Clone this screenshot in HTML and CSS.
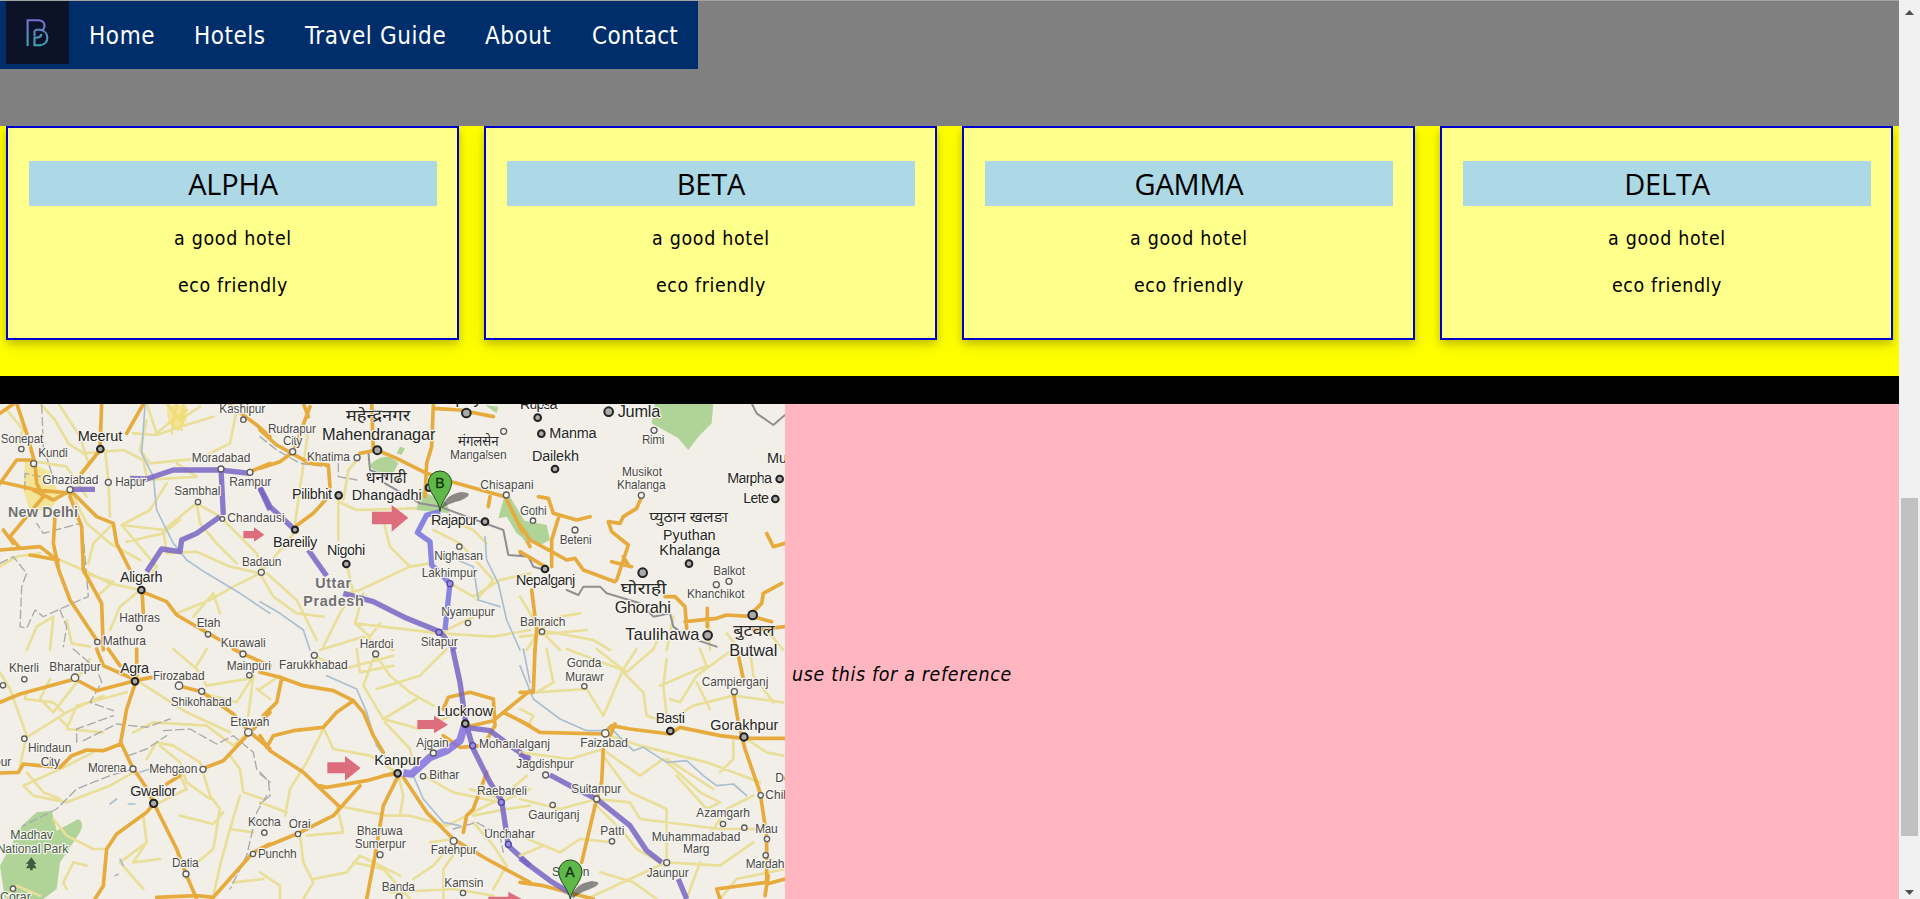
FILE: index.html
```html
<!DOCTYPE html>
<html lang="en">
<head>
<meta charset="utf-8">
<title>Hotels</title>
<link rel="stylesheet" href="styles.css">
</head>
<body>
<div class="window">
<main class="page">
  <header class="top">
    <nav class="nav">
      <svg class="logo" viewBox="6 1 63 63"><defs><linearGradient id="lg" x1="0" y1="19" x2="0" y2="46" gradientUnits="userSpaceOnUse"><stop offset="0" stop-color="#8068cf"/><stop offset="1" stop-color="#35a9b5"/></linearGradient></defs><path d="M27.6 46V20.2H38.5C45 20.5 46.2 27 42 30.5M34.5 36V31.5Q35 29.5 37.500 29.8H40C49.500 31 50 44.500 40 45.200H34.500V37.500H38Q41 37 41.500 34" fill="none" stroke="url(#lg)" stroke-width="2.1"/></svg>
      <a class="link home">Home</a><a class="link hotels">Hotels</a><a class="link guide">Travel Guide</a><a class="link about">About</a><a class="link contact">Contact</a>
    </nav>
  </header>
  <section class="cards">
    <article class="card"><h2>ALPHA</h2><p class="good">a good hotel</p><p class="eco">eco friendly</p></article>
    <article class="card"><h2>BETA</h2><p class="good">a good hotel</p><p class="eco">eco friendly</p></article>
    <article class="card"><h2>GAMMA</h2><p class="good">a good hotel</p><p class="eco">eco friendly</p></article>
    <article class="card"><h2>DELTA</h2><p class="good">a good hotel</p><p class="eco">eco friendly</p></article>
  </section>
  <div class="band"></div>
  <section class="place">
    <svg class="map" viewBox="0 404 785 495">
      <!-- north-west -->
      <g transform="translate(0,400) scale(.33333)">
        <g class="yr"><path d="M120 10L165 60L205 130L250 160L370 150L430 180L440 230M175 10L240 110L265 190L240 220M440 10L470 100L500 75L560 30M500 10L540 60L600 20M530 10L515 100M550 10L545 90M400 100L470 105L540 80L640 50M315 150L325 240L330 350M440 240L590 230L530 190M365 375L450 330L500 250M365 375L490 390L590 310L660 350L770 460L790 520M365 375L470 500L440 540M380 425L490 400L540 360M440 60L420 150L450 190L600 175L690 130L710 30M590 310L600 370L650 430L710 490M490 390L500 460L590 455L690 500L780 520L700 560L630 600L530 640M340 370L280 430L265 490M180 480L250 510L330 550L420 570M250 520L340 545L290 590M420 570L360 620L330 690M580 650L640 580L660 640M80 180L200 200L260 290M210 270L260 370L330 430L420 480M80 750L110 680L160 650L150 750M200 660L215 730L270 740M0 500L50 470L120 460M20 30L70 90L50 130"/></g>
        <path class="town" d="M75 180L150 215L180 290L150 330L90 335L70 270ZM500 15L560 15L560 60L535 95L505 70Z"/>
        <path class="border" d="M125 15L130 140L155 220M75 270L75 220L120 230M0 490L40 470L80 520L65 560L60 680L80 685L105 630L130 650L240 600L265 590L250 410L240 370L130 400L110 370M180 630L200 680L190 740"/>
        <path class="river" d="M435 15L425 160L460 230L470 330L500 390L520 430L560 480L620 520L720 580L810 640"/>
        <g class="or"><path d="M50 10L80 100L105 190L110 250L130 290M40 12L0 40M305 10L300 150L245 220M430 12L380 100M0 250L50 180L100 180M0 245L110 270L220 280L290 350L340 370L350 430L390 510M130 290L30 410L60 445L120 440L165 475L180 520L210 600L290 720M0 450L60 445M165 350L160 430L175 500M210 290L245 380L250 510L305 610L310 750M90 465L175 480M100 270L160 300L215 270M10 390L40 430M426 570L430 640M426 575L500 605L530 645L625 700L660 720M690 15L770 75L810 110M750 215L810 190"/></g>
        <g class="route"><path d="M210 268H285M390 235L440 237L520 210H660L750 220M663 207L670 345M660 350L590 400L545 420L540 455L485 447L440 515M780 265L810 330"/></g>
      </g>
      <!-- north -->
      <g transform="translate(260,400) scale(.33333)">
        <g class="yr"><path d="M145 90L105 370M145 190L200 195M300 170L265 210L250 300M235 290L235 420M235 305L290 330L470 325M370 360L390 440L450 500L300 570L260 580M450 500L510 490M260 490L280 580L240 640L190 740M0 520L40 590L110 640L190 650M20 520L110 600L170 720M180 750L310 710L400 750M285 670L540 700L660 640M310 580L285 670L330 710L360 670M570 550L640 590L720 540L810 520M520 390L600 430L700 540L650 600M540 700L700 710L810 690M545 350L640 390L680 430M105 395L70 440L0 520"/></g>
        <path class="green" d="M335 190Q380 150 415 190L400 220Q350 220 330 200ZM420 140L435 145L425 165L410 160ZM730 300L750 290L810 390V430L770 400L740 350L715 355ZM480 270L560 310L570 340L470 330ZM675 15L715 20L710 40Z"/>
        <path class="border solid" d="M325 155L330 210L380 230M375 250L480 310L540 320L620 350L730 390L745 465L810 470"/>
        <path class="border" d="M0 110L50 150L120 190L200 200M235 190V230L290 240"/>
        <path class="river" d="M0 605L60 640L130 690L150 750M675 410L680 480L715 550L740 660L780 750M570 470L640 500L655 600L720 620"/>
        <g class="or"><path d="M0 90L50 135L150 190L205 195L210 260L205 290L160 340L105 380M0 205L60 185L100 155L150 20M300 160L350 150L410 175L500 220L575 245L735 290L810 440M335 10L340 150M520 15L515 140L500 190L495 290M520 25L600 30L700 50M130 10L145 50M690 290L685 320"/></g>
        <g class="route"><path d="M0 262L30 320L105 390M145 450L200 528M250 580L340 605L440 655L540 695L585 750"/></g><g class="route blue"><path d="M540 335L500 345L472 398L510 425L515 495L570 550L555 690"/></g>
        <path class="arrow" d="M336 335H395V315L445 353L395 395V373H336Z"/>
      </g>
      <!-- north-east -->
      <g transform="translate(520,400) scale(.33333)">
        <path class="green" d="M405 10H580L575 70L535 110L505 150L475 115L395 70ZM0 360L80 375L90 420L60 435L10 420Z"/>
        <g class="yr"><path d="M0 590L60 690L220 720L270 750M60 690L120 650L180 640M60 690L20 750M60 690L120 750M0 710L200 690M460 650L440 750M400 750L420 700M740 690L790 750M565 660L570 750M620 700L660 750"/></g>
        <path class="border solid" d="M695 10L710 40L760 75L795 45M0 462L25 470L40 500L75 510M140 570L175 585L190 560L240 560L260 580L360 610L400 650L450 640L460 680L500 710L590 740"/>
        <g class="or"><path d="M55 290L85 295L100 340L170 360L210 350M0 375L30 420L95 455L140 480L165 475L190 510L285 545M115 355L95 420L95 500M365 290L350 325L310 350L300 370L265 365L275 395L325 435L290 540M275 485L335 500M310 470L325 495M0 455L75 500M35 570L50 690L45 750M435 590L465 590L495 620L500 685M495 665L590 655L620 645L700 650L755 665M562 625V680M695 640L725 610L730 580L785 550M740 400L760 440L795 430M700 690L795 680"/></g>
      </g>
      <!-- south-west -->
      <g transform="translate(0,649) scale(.33333)">
        <path class="green" d="M65 530L110 490L155 485L170 545L235 510Q255 520 240 550L180 640L170 720L130 750H15L0 650Z"/>
        <g class="yr"><path d="M0 70L30 120L80 260L60 350M80 265L200 190L310 140M80 130L75 150L160 160L190 190M150 90L120 150L160 190L230 100M270 30L230 90M420 100L560 190L690 250M310 250L200 240L230 170L380 130M200 230L180 210M400 250L460 220L620 230L700 290L745 250M440 330L470 280L520 290L600 340L630 440L660 480L640 600L580 650M480 290L540 340L560 400L630 450M280 310L180 360L70 410L100 440L200 460L330 410L400 370M80 370L130 430L180 450M460 470L560 420L540 380M540 500L640 525L670 490M430 500L440 580L360 640L430 720M440 580L400 640L480 630M160 510L200 560L280 600L310 600M200 720L190 700L220 640L260 650M690 320L720 360L730 430L790 450M720 440L690 540L660 650L640 740M690 540L760 550M520 0L590 60L620 110L740 90M600 130L710 160L760 80L745 200M620 0L590 50M770 120L810 150M700 700L790 690M20 740L50 710L120 740"/></g>
        <path class="border" d="M220 0L290 60L305 100L270 160L340 185M230 280V240L340 200M250 275L350 225L440 235L510 210M490 245L570 240L650 285L700 260L760 310L770 360L810 400M385 320L440 300L500 260M400 360L330 380L230 420L170 480L70 530M800 440L770 490L740 620L690 720"/>
        <path class="river" d="M330 465L350 450M385 465H405M360 630L370 650M345 680L355 675M420 370L450 360"/>
        <g class="or"><path d="M0 160L60 135L225 90L290 125L405 95L455 85M290 0L310 50L400 90M325 0L360 50M410 0V90L380 180L362 280L395 350L435 410L460 460M362 285L310 305L260 303L215 320L180 355L120 350L70 345L55 370L0 372M460 465L440 490L350 555L320 600L310 710L285 750M465 470L530 600L560 680L590 750M605 360L670 335L750 250L810 300M535 110L605 128L700 195L745 245M810 190L760 240M500 405L540 380M470 745L590 740L640 745L760 610L810 585M700 0L730 15L810 50"/></g>
      </g>
      <!-- south -->
      <g transform="translate(260,649) scale(.33333)">
        <g class="yr"><path d="M0 120L60 80M160 20L250 60L400 20M345 15L390 80L450 130L520 170M345 15L310 110L370 210L470 150M350 120L480 80L560 0M290 0L300 70L400 50M370 210L480 240L600 190M190 235L220 300L330 320L410 370M190 240L140 340L90 420L75 500M0 460L80 490M230 470L380 500L450 500L560 530L620 500L720 450M415 380L430 440L420 500M490 380L580 430L720 460L810 420M375 220L450 300L460 340M140 560L250 550L230 470M120 560L130 640L160 700L130 750M0 670L60 710V750M160 690L260 670L300 620L420 680M510 580L580 570M580 580L520 650L460 690M600 590L550 660V750M390 730L580 720L700 740M640 520L700 590L740 650L700 720M280 640L370 660L450 750M640 500L740 480L810 470M630 420L720 450L800 380"/></g>
        <path class="border" d="M0 375L25 395L30 440L0 465M580 540L650 520L720 560L730 610"/>
        <path class="river" d="M200 80L290 120L320 190L350 290L380 330M460 380L490 450L550 520L600 530M790 0L810 100"/>
        <g class="or"><path d="M0 70L60 85L130 110L220 125L280 155L310 190L340 260L370 310M65 90L50 160L10 200M280 155L230 190L190 235L100 245L40 260L20 295M0 260L30 305L130 370L235 470M410 370L320 395L200 415L180 410M300 410L220 500L110 555L0 600M415 380L370 470L345 620L320 750M430 385L500 490L580 570L680 630L810 700M615 235L700 215L730 190L810 125M550 180L565 145L630 130L700 150L705 230L670 290L600 295L550 260M730 190L810 230M680 370L640 480L620 500L610 550M410 375L370 380"/></g>
        <g class="route"><path d="M578 0L600 100L617 220L640 300L690 400L725 455L745 590L810 650M617 235L690 245L750 290L810 330"/></g><g class="route thick"><path d="M615 225L600 275L560 305L510 325L455 375L430 372"/></g>
        <path class="arrow" d="M202 340H255V321L302 357L255 395V373H202ZM472 213H522V200L564 227L522 253V240H472ZM685 743H745V728L785 750H685Z"/>
      </g>
      <!-- south-east -->
      <g transform="translate(520,649) scale(.33333)">
        <g class="yr"><path d="M80 0L100 100L50 130L200 120L250 200L310 60L350 0M140 0L300 60L370 130L380 200L440 220M230 0L320 70L400 0M440 30L430 110L440 200M450 150L480 160L530 80L640 0M530 100L570 180M420 110L560 50L540 0M440 220L520 170L640 140L790 160M640 270L640 330L600 370M270 260L360 290L560 340L720 400M250 320L330 430L440 480V640M260 310L360 380L430 330L540 430L600 460L560 480L470 380M440 330L580 420M0 450L120 480L230 450L330 460L360 510L600 540L730 540M0 560L120 610L180 570L280 580M230 470L310 550L350 600L420 640M440 640L330 690L200 750M440 640L600 650L700 580M240 670L340 700L410 750M500 750L540 640M560 570L620 480L700 440M0 310L150 330L250 300M680 270L740 310L790 320M0 180L40 200L30 220M600 750L650 690L795 660M690 0L700 80L760 160M0 620L70 590"/></g>
        <path class="river" d="M0 50L40 150L120 210L200 245H260M280 245L340 305L370 295L440 340L500 335L550 380L590 410L640 405L680 440"/>
        <g class="or"><path d="M45 0L40 130H0M0 215L60 250L250 255L275 230L330 240L450 255L480 235L600 260L670 268L795 268M285 225L270 260M250 300L245 400L230 450L185 640M640 130L655 220L675 300L720 430L740 560V710M655 20L670 90M740 700L590 720L600 750M740 705L795 690M735 740L745 680M0 700L70 710L220 750"/></g>
        <g class="route"><path d="M0 315L30 340M90 378L150 410L230 450L330 530L380 605L425 640M475 690L500 750M0 628L90 695L155 735"/></g>
      </g>

      <g transform="translate(0,400) scale(.33333)">
        <g class="s"><text x="658" y="40" textLength="138">Kashipur</text><text x="2" y="128" textLength="128">Sonepat</text><text x="115" y="172" textLength="88">Kundi</text><text x="575" y="187" textLength="176">Moradabad</text><text x="127" y="251" textLength="168">Ghaziabad</text><text x="346" y="257" textLength="92">Hapur</text><text x="688" y="257" textLength="126">Rampur</text><text x="523" y="284" textLength="138">Sambhal</text><text x="682" y="366" textLength="172">Chandausi</text><text x="726" y="498" textLength="118">Badaun</text><text x="358" y="667" textLength="122">Hathras</text><text x="590" y="681" textLength="71">Etah</text><text x="308" y="735" textLength="130">Mathura</text><text x="662" y="740" textLength="135">Kurawali</text></g>
        <g class="m"><text x="233" y="122" textLength="134">Meerut</text><text x="360" y="545" textLength="128">Aligarh</text></g>
        <text class="region" x="24" y="350" textLength="210">New Delhi</text>
        <g class="dot"><circle cx="730" cy="59" r="8"/><circle cx="64" cy="147" r="8"/><circle cx="101" cy="191" r="9"/><circle cx="663" cy="207" r="9"/><circle cx="750" cy="217" r="9"/><circle cx="325" cy="247" r="9"/><circle cx="210" cy="269" r="9"/><circle cx="594" cy="306" r="8"/><circle cx="667" cy="357" r="7"/><circle cx="784" cy="517" r="9"/><circle cx="418" cy="684" r="8"/><circle cx="624" cy="703" r="8"/><circle cx="292" cy="726" r="8"/></g>
        <g class="dot city"><circle cx="301" cy="147" r="10"/><circle cx="424" cy="570" r="10"/></g>
        <path class="arrow" d="M730 393H762V382L793 404L762 425V415H730Z"/>
      </g>
      <g transform="translate(260,400) scale(.33333)">
        <g class="s"><text x="24" y="98" textLength="144">Rudrapur</text><text x="69" y="136" textLength="58">City</text><text x="141" y="184" textLength="129">Khatima</text><text x="570" y="177" textLength="170">Mangalsen</text><text x="661" y="266" textLength="160">Chisapani</text><text x="523" y="480" textLength="146">Nighasan</text><text x="485" y="532" textLength="166">Lakhimpur</text><text x="544" y="647" textLength="160">Nyamupur</text><text x="482" y="737" textLength="111">Sitapur</text><text x="299" y="745" textLength="101">Hardoi</text></g>
        <g class="m"><text x="96" y="298" textLength="120">Pilibhit</text><text x="275" y="299" textLength="210">Dhangadhi</text><text x="39" y="440" textLength="133">Bareilly</text><text x="201" y="465" textLength="115">Nigohi</text><text x="513" y="375" textLength="139">Rajapur</text></g>
        <text class="l" x="186" y="120" textLength="340">Mahendranagar</text><text class="hi" x="257" y="63" textLength="194" lengthAdjust="spacingAndGlyphs">महेन्द्रनगर</text><text class="hi small" x="594" y="137" textLength="122" lengthAdjust="spacingAndGlyphs">मंगलसेन</text><text class="hi" x="317" y="250" textLength="123" lengthAdjust="spacingAndGlyphs">धनगढी</text>
        <g class="region"><text x="166" y="565" textLength="107">Uttar</text><text x="130" y="617" textLength="181">Pradesh</text></g>
        <g class="dot"><circle cx="98" cy="155" r="9"/><circle cx="291" cy="173" r="9"/><circle cx="731" cy="94" r="9"/><circle cx="739" cy="285" r="9"/><circle cx="598" cy="440" r="8"/><circle cx="624" cy="669" r="8"/></g><g class="dot on-route"><circle cx="570" cy="551" r="9"/><circle cx="537" cy="697" r="9"/></g>
        <g class="dot city"><circle cx="352" cy="151" r="12"/><circle cx="619" cy="39" r="13"/><circle cx="236" cy="286" r="10"/><circle cx="507" cy="263" r="10"/><circle cx="105" cy="389" r="9"/><circle cx="259" cy="492" r="10"/><circle cx="675" cy="365" r="10"/></g>
        <text class="l" x="540" y="12">Dipayal</text>
        <path class="shadow" d="M545 325Q555 283 605 276Q650 280 600 302Q565 310 545 325Z"/><path class="pin" d="M540 334C537 300 507 280 505 248A35 35 0 0 1 575 248C573 280 543 300 540 334Z"/><text class="pinletter" x="540" y="263">B</text>
      </g>
      <g transform="translate(520,400) scale(.33333)">
        <g class="m"><text x="0" y="28" textLength="113">Rupsa</text><text x="88" y="115" textLength="142">Manma</text><text x="36" y="183" textLength="141">Dailekh</text><text x="-12" y="556" textLength="178">Nepalganj</text><text x="741" y="190">Mugu</text><text x="622" y="250" textLength="134">Marpha</text><text x="670" y="310" textLength="77">Lete</text><text x="429" y="419" textLength="158">Pyuthan</text><text x="418" y="464" textLength="182">Khalanga</text></g>
        <g class="l"><text x="293" y="50" textLength="128">Jumla</text><text x="284" y="638" textLength="169">Ghorahi</text><text x="316" y="721" textLength="222">Taulihawa</text></g>
        <g class="s"><text x="366" y="131" textLength="67">Rimi</text><text x="306" y="228" textLength="120">Musikot</text><text x="291" y="266" textLength="146">Khalanga</text><text x="0" y="345" textLength="80">Gothi</text><text x="119" y="431" textLength="96">Beteni</text><text x="580" y="525" textLength="95">Balkot</text><text x="501" y="595" textLength="173">Khanchikot</text><text x="0" y="678" textLength="136">Bahraich</text></g>
        <text class="hi small" x="388" y="365" textLength="236" lengthAdjust="spacingAndGlyphs">प्युठान खलङा</text><text class="hi" x="302" y="582" textLength="137" lengthAdjust="spacingAndGlyphs">घोराही</text><text class="hi" x="640" y="709" textLength="124" lengthAdjust="spacingAndGlyphs">बुटवल</text>
        <g class="dot"><circle cx="402" cy="91" r="9"/><circle cx="364" cy="286" r="9"/><circle cx="39" cy="362" r="8"/><circle cx="165" cy="390" r="9"/><circle cx="627" cy="544" r="9"/><circle cx="589" cy="554" r="9"/><circle cx="66" cy="695" r="8"/></g>
        <g class="dot city"><circle cx="53" cy="53" r="10"/><circle cx="64" cy="101" r="10"/><circle cx="266" cy="35" r="13"/><circle cx="105" cy="207" r="10"/><circle cx="779" cy="237" r="10"/><circle cx="766" cy="297" r="10"/><circle cx="507" cy="491" r="10"/><circle cx="368" cy="518" r="13"/><circle cx="75" cy="507" r="10"/><circle cx="563" cy="706" r="13"/><circle cx="698" cy="645" r="13"/></g>
      </g>
      <g transform="translate(0,649) scale(.33333)">
        <g class="s"><text x="27" y="68" textLength="90">Kherli</text><text x="148" y="66" textLength="154">Bharatpur</text><text x="459" y="92" textLength="155">Firozabad</text><text x="680" y="62" textLength="133">Mainpuri</text><text x="512" y="170" textLength="183">Shikohabad</text><text x="691" y="230" textLength="117">Etawah</text><text x="84" y="308" textLength="130">Hindaun</text><text x="122" y="350" textLength="58">City</text><text x="-18" y="350">pur</text><text x="264" y="369" textLength="115">Morena</text><text x="448" y="371" textLength="144">Mehgaon</text><text x="744" y="531" textLength="98">Kocha</text><text x="516" y="653" textLength="80">Datia</text><text x="774" y="626" textLength="116">Punchh</text></g>
        <g class="m"><text x="361" y="72" textLength="86">Agra</text><text x="391" y="440" textLength="138">Gwalior</text></g>
        <g class="park"><text x="31" y="571" textLength="128">Madhav</text><text x="-10" y="613" textLength="215">National Park</text><text x="0" y="756">Corar</text><path d="M94 625L78 645H86L78 658H90V664H98V658H110L102 645H109Z"/></g>
        <g class="dot"><circle cx="73" cy="91" r="8"/><circle cx="9" cy="109" r="8"/><circle cx="225" cy="86" r="11"/><circle cx="537" cy="110" r="11"/><circle cx="605" cy="127" r="9"/><circle cx="729" cy="15" r="9"/><circle cx="748" cy="79" r="8"/><circle cx="745" cy="250" r="11"/><circle cx="73" cy="269" r="8"/><circle cx="399" cy="360" r="9"/><circle cx="609" cy="361" r="9"/><circle cx="558" cy="675" r="9"/><circle cx="759" cy="615" r="8"/><circle cx="793" cy="551" r="8"/><circle cx="39" cy="719" r="8"/></g>
        <g class="dot city"><circle cx="405" cy="97" r="10"/><circle cx="461" cy="463" r="11"/></g>
      </g>
      <g transform="translate(260,649) scale(.33333)">
        <g class="s"><text x="57" y="61" textLength="206">Farukkhabad</text><text x="469" y="295" textLength="97">Ajgain</text><text x="657" y="298" textLength="213">Mohanlalganj</text><text x="769" y="357" textLength="172">Jagdishpur</text><text x="508" y="391" textLength="90">Bithar</text><text x="651" y="439" textLength="150">Raebareli</text><text x="86" y="537" textLength="66">Orai</text><text x="290" y="559" textLength="138">Bharuwa</text><text x="284" y="597" textLength="153">Sumerpur</text><text x="512" y="615" textLength="138">Fatehpur</text><text x="673" y="567" textLength="152">Unchahar</text><text x="553" y="714" textLength="117">Kamsin</text><text x="365" y="725" textLength="100">Banda</text></g>
        <g class="m"><text x="531" y="200" textLength="168">Lucknow</text><text x="343" y="349" textLength="140">Kanpur</text></g>
        <g class="dot"><circle cx="163" cy="19" r="9"/><circle cx="347" cy="15" r="9"/><circle cx="520" cy="312" r="9"/><circle cx="489" cy="382" r="8"/><circle cx="114" cy="555" r="8"/><circle cx="360" cy="617" r="9"/><circle cx="581" cy="576" r="10"/><circle cx="417" cy="744" r="9"/><circle cx="609" cy="732" r="8"/></g><g class="dot on-route"><circle cx="638" cy="290" r="9"/><circle cx="724" cy="460" r="9"/><circle cx="745" cy="586" r="9"/></g>
        <g class="dot city"><circle cx="413" cy="373" r="10"/><circle cx="616" cy="224" r="10"/></g>
      </g>
      <g transform="translate(520,649) scale(.33333)">
        <g class="s"><text x="140" y="55" textLength="104">Gonda</text><text x="136" y="96" textLength="116">Murawr</text><text x="181" y="294" textLength="143">Faizabad</text><text x="545" y="111" textLength="200">Campierganj</text><text x="154" y="432" textLength="150">Sultanpur</text><text x="25" y="510" textLength="153">Gauriganj</text><text x="241" y="559" textLength="72">Patti</text><text x="529" y="503" textLength="161">Azamgarh</text><text x="395" y="575" textLength="266">Muhammadabad</text><text x="489" y="613" textLength="79">Marg</text><text x="380" y="683" textLength="126">Jaunpur</text><text x="706" y="553" textLength="67">Mau</text><text x="677" y="657" textLength="116">Mardah</text><text x="736" y="450">Chilkahar</text><text x="766" y="399">Deoria</text><text x="96" y="682" textLength="112">Soraon</text></g>
        <g class="m"><text x="407" y="221" textLength="88">Basti</text><text x="571" y="242" textLength="204">Gorakhpur</text></g><text class="l" x="628" y="20" textLength="144">Butwal</text>
        <g class="dot"><circle cx="193" cy="112" r="8"/><circle cx="256" cy="253" r="11"/><circle cx="643" cy="128" r="9"/><circle cx="77" cy="378" r="9"/><circle cx="230" cy="450" r="9"/><circle cx="98" cy="468" r="8"/><circle cx="276" cy="577" r="8"/><circle cx="609" cy="525" r="8"/><circle cx="673" cy="536" r="8"/><circle cx="741" cy="570" r="8"/><circle cx="737" cy="619" r="8"/><circle cx="440" cy="641" r="9"/><circle cx="722" cy="439" r="8"/></g>
        <g class="dot city"><circle cx="451" cy="246" r="10"/><circle cx="672" cy="264" r="11"/></g>
        <path class="shadow" d="M155 742Q165 705 215 696Q260 700 205 722Q180 730 160 748Z"/><path class="pin" d="M151 752C147 720 117 700 116 668A35 35 0 0 1 186 668C184 700 154 720 151 752Z"/><text class="pinletter" x="150" y="683">A</text>
      </g>
    </svg>
    <p class="note">use this for a reference</p>
  </section>
</main>
<div class="scrollbar"><svg viewBox="0 0 9 5"><path d="M0 5L4.500 0L9 5Z"/></svg><div class="thumb"></div><svg viewBox="0 0 9 5"><path d="M0 0L4.500 5L9 0Z"/></svg></div>
</div>
</body>
</html>
```
FILE: styles.css
```css
* { box-sizing: border-box; }
body { margin: 0; overflow: hidden; font-family: "DejaVu Sans Condensed", "DejaVu Sans", sans-serif; font-stretch: condensed; color: #000; }
.window { display: flex; width: 1920px; height: 899px; overflow: hidden; }
.page { width: 1899px; }
.top { height: 126px; background: #808080; border-top: 1px solid #a3a3a3; }
.nav { display: flex; width: 698px; height: 68px; padding-left: 6px; background: #002e6b; }
.logo { width: 63px; height: 63px; background: #0c1328; }
.link { padding-left: 20px; font-size: 24px; line-height: 71px; color: #fff; white-space: nowrap; }
.home { width: 105px; letter-spacing: .6px; }
.hotels { width: 111px; letter-spacing: .5px; }
.guide { width: 180px; letter-spacing: .6px; }
.about { width: 107px; letter-spacing: .5px; }
.contact { letter-spacing: .3px; }
.cards { display: grid; grid-template-columns: repeat(4, 453px); gap: 25px; height: 250px; padding: 0 6px 36px; background: #ff0; overflow: hidden; }
.card { padding: 33px 20px 0 21px; border: 2px solid #0000cd; background: #ffff8c; box-shadow: 0 4px 8px rgba(0,0,0,.2), 0 6px 20px rgba(0,0,0,.08); text-align: center; }
.card h2 { height: 45px; margin: 0 0 21px; background: #add8e6; font: 400 29px/45px "Open Sans", "Noto Sans", sans-serif; letter-spacing: -.2px; }
.card p { height: 24px; margin: 0 0 23px; font-size: 19.4px; line-height: 24px; }
.good { letter-spacing: .7px; }
.eco { letter-spacing: .6px; }
.band { height: 28px; background: #000; }
.place { display: flex; height: 495px; background: #ffb6c1; }
.map { width: 785px; height: 495px; background: #f2efe9; }
.note { margin: 258px 0 0 7px; font-size: 19.4px; line-height: 26px; font-style: italic; white-space: nowrap; letter-spacing: .68px; }
.scrollbar { display: flex; flex-direction: column; align-items: center; width: 21px; padding: 10px 0 4px; background: #f1f1f1; }
.scrollbar svg { width: 9px; height: 5px; fill: #505050; }
.thumb { width: 17px; height: 338px; margin: 483px 0 54px; background: #c1c1c1; }

.yr, .or, .route, .river, .border { fill: none; stroke-linejoin: round; stroke-linecap: round; }
.yr { stroke: #e9df98; stroke-width: 8; }
.or { stroke: #e6ab3c; stroke-width: 11; }
.route { stroke: #7765c4; stroke-width: 16; opacity: .85; stroke-linecap: butt; }
.blue { stroke: #7672de; }
.thick { stroke-width: 23; stroke: #8371df; }
.river { stroke: #a9bfd0; stroke-width: 5; }
.border { stroke: #aaa9aa; stroke-width: 4; stroke-dasharray: 25 12; }
.solid { stroke: #8f8f92; stroke-width: 6; stroke-dasharray: none; }
.green { fill: #b0d397; }
.town { fill: #f4dc60; opacity: .6; }
.arrow { fill: #dd6c7c; }
.map text { font-family: "Liberation Sans", sans-serif; font-stretch: normal; paint-order: stroke; stroke: #f7f5f0; stroke-width: 7px; stroke-linejoin: round; }
.s { font-size: 36px; fill: #484848; }
.m { font-size: 43.5px; fill: #252525; }
.l { font-size: 49px; fill: #252525; }
.region { font-size: 43px; font-weight: bold; fill: #707070; }
.park { font-size: 37px; fill: #445b43; }
.map .hi { font-family: "Noto Sans Devanagari", "Noto Sans", sans-serif; font-size: 50px; fill: #292929; stroke-width: 4px; }
.map .small { font-size: 42px; }
.dot { fill: #f5f3ef; stroke: #5c5c5c; stroke-width: 4; }
.city { fill: #aaa; stroke: #222; stroke-width: 6; }
.on-route { fill: #9990e4; stroke: #5045a0; }
.shadow { fill: #333; opacity: .55; }
.pin { fill: #5eb949; stroke: #25491f; stroke-width: 3; }
.map .pinletter { font-size: 42px; text-anchor: middle; fill: #142f12; stroke: #142f12; stroke-width: 1px; }
```
